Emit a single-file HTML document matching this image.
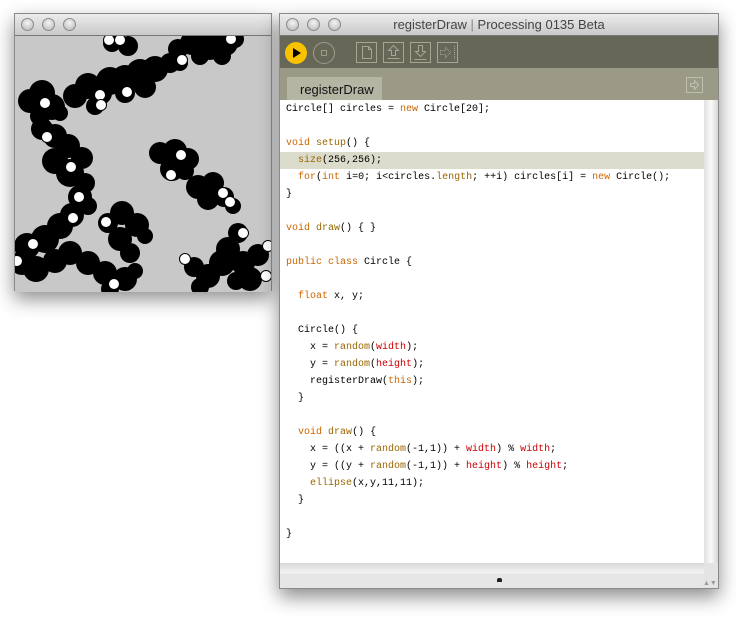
<!DOCTYPE html>
<html><head><meta charset="utf-8"><style>
*{margin:0;padding:0;box-sizing:border-box}
body{width:736px;height:618px;background:#fff;position:relative;overflow:hidden;font-family:"Liberation Sans",sans-serif}
.win{position:absolute;box-shadow:0 8px 18px rgba(0,0,0,.45);border:1px solid #8a8a8a}
.tb{position:absolute;left:0;top:0;right:0;height:22px;background:linear-gradient(#ececec,#c9c9c9);border-bottom:1px solid #777}
.lt{position:absolute;top:4px;width:13px;height:13px;border-radius:50%;background:radial-gradient(circle at 50% 35%,#f4f4f4,#b5b5b5);border:1px solid #8b8b8b}
.code{position:absolute;left:6px;top:100px;font-family:"Liberation Mono",monospace;font-size:10px;line-height:17px;white-space:pre;color:#000}
.k{color:#cc6600}.f{color:#996600}.r{color:#cc0000}
</style></head><body>
<div class="win" style="left:14px;top:13px;width:258px;height:278px;background:#c8c8c8">
<div class="tb"><div class="lt" style="left:6px"></div><div class="lt" style="left:27px"></div><div class="lt" style="left:48px"></div></div>
<svg style="position:absolute;left:0;top:22px" width="256" height="256" viewBox="15 35 256 256">
<rect x="15" y="35" width="256" height="256" fill="#c8c8c8"/>
<g fill="#000">
<circle cx="112" cy="42" r="9"/><circle cx="128" cy="45" r="10"/>
<circle cx="178" cy="48" r="10"/><circle cx="192" cy="42" r="12"/><circle cx="210" cy="45" r="14"/><circle cx="225" cy="42" r="13"/><circle cx="235" cy="38" r="9"/><circle cx="200" cy="55" r="9"/><circle cx="222" cy="55" r="9"/><circle cx="180" cy="62" r="8"/>
<circle cx="30" cy="100" r="12"/><circle cx="42" cy="92" r="13"/><circle cx="52" cy="106" r="13"/><circle cx="40" cy="115" r="10"/><circle cx="60" cy="112" r="8"/>
<circle cx="75" cy="95" r="12"/><circle cx="88" cy="85" r="13"/><circle cx="100" cy="92" r="12"/><circle cx="110" cy="80" r="14"/><circle cx="125" cy="78" r="14"/><circle cx="140" cy="72" r="14"/><circle cx="155" cy="68" r="13"/><circle cx="170" cy="62" r="10"/><circle cx="145" cy="86" r="11"/><circle cx="125" cy="92" r="10"/><circle cx="95" cy="105" r="9"/>
<circle cx="42" cy="128" r="11"/><circle cx="55" cy="135" r="12"/><circle cx="68" cy="145" r="12"/><circle cx="82" cy="157" r="11"/><circle cx="55" cy="160" r="13"/><circle cx="70" cy="172" r="14"/><circle cx="85" cy="182" r="10"/><circle cx="80" cy="196" r="12"/><circle cx="88" cy="205" r="9"/><circle cx="72" cy="214" r="12"/><circle cx="60" cy="225" r="13"/><circle cx="45" cy="238" r="14"/><circle cx="27" cy="245" r="13"/><circle cx="22" cy="262" r="12"/><circle cx="36" cy="268" r="13"/><circle cx="55" cy="260" r="12"/><circle cx="70" cy="252" r="12"/><circle cx="88" cy="262" r="12"/><circle cx="105" cy="272" r="12"/><circle cx="125" cy="278" r="12"/><circle cx="110" cy="288" r="9"/><circle cx="135" cy="270" r="8"/>
<circle cx="108" cy="222" r="10"/><circle cx="122" cy="212" r="12"/><circle cx="137" cy="224" r="12"/><circle cx="120" cy="238" r="12"/><circle cx="130" cy="252" r="10"/><circle cx="145" cy="235" r="8"/>
<circle cx="160" cy="152" r="11"/><circle cx="175" cy="150" r="12"/><circle cx="188" cy="158" r="11"/><circle cx="172" cy="168" r="12"/><circle cx="185" cy="170" r="9"/>
<circle cx="198" cy="186" r="12"/><circle cx="213" cy="182" r="11"/><circle cx="208" cy="198" r="11"/><circle cx="224" cy="196" r="10"/><circle cx="233" cy="205" r="8"/>
<circle cx="238" cy="232" r="10"/><circle cx="228" cy="248" r="12"/><circle cx="222" cy="262" r="13"/><circle cx="208" cy="275" r="12"/><circle cx="194" cy="266" r="10"/><circle cx="243" cy="262" r="12"/><circle cx="258" cy="254" r="11"/><circle cx="250" cy="278" r="12"/><circle cx="200" cy="286" r="9"/><circle cx="236" cy="280" r="9"/>
</g>
<g fill="#fff" stroke="#000" stroke-width="1">
<circle cx="109" cy="39" r="5.5"/><circle cx="120" cy="39" r="5.5"/><circle cx="182" cy="59" r="5.5"/><circle cx="231" cy="38" r="5.5"/>
<circle cx="45" cy="102" r="5.5"/><circle cx="100" cy="94" r="5.5"/><circle cx="101" cy="104" r="5.5"/><circle cx="127" cy="91" r="5.5"/>
<circle cx="47" cy="136" r="5.5"/><circle cx="71" cy="166" r="5.5"/><circle cx="79" cy="196" r="5.5"/><circle cx="73" cy="217" r="5.5"/><circle cx="33" cy="243" r="5.5"/><circle cx="17" cy="260" r="5.5"/><circle cx="106" cy="221" r="5.5"/><circle cx="114" cy="283" r="5.5"/>
<circle cx="181" cy="154" r="5.5"/><circle cx="171" cy="174" r="5.5"/><circle cx="223" cy="192" r="5.5"/><circle cx="230" cy="201" r="5.5"/>
<circle cx="243" cy="232" r="5.5"/><circle cx="185" cy="258" r="5.5"/><circle cx="268" cy="245" r="5.5"/><circle cx="266" cy="275" r="5.5"/>
</g></svg>
</div>
<div class="win" style="left:279px;top:13px;width:440px;height:576px;background:#fff">
<div class="tb"><div class="lt" style="left:6px"></div><div class="lt" style="left:27px"></div><div class="lt" style="left:48px"></div>
<div style="position:absolute;left:0;right:0;top:3px;text-align:center;font-size:13px;color:#444">registerDraw <span style="color:#888">|</span> Processing 0135 Beta</div></div>
<div style="position:absolute;left:0;top:22px;width:438px;height:32px;background:#676758">
<div style="position:absolute;left:5px;top:6px;width:22px;height:22px;border-radius:50%;background:#f8c200"></div>
<div style="position:absolute;left:13px;top:12px;width:0;height:0;border-left:8px solid #000;border-top:5px solid transparent;border-bottom:5px solid transparent"></div>
<div style="position:absolute;left:33px;top:6px;width:22px;height:22px;border-radius:50%;border:1px solid #9d9d8c"></div>
<div style="position:absolute;left:41px;top:14px;width:6px;height:6px;border:1px solid #9d9d8c"></div>
<svg style="position:absolute;left:76px;top:6px" width="110" height="22" fill="none" stroke="#a6a695" stroke-width="1">
<rect x="0.5" y="0.5" width="20" height="20"/><path d="M6.5 4.5h6l3 3v9h-9z M12.5 4.5v3h3"/>
<rect x="27.5" y="0.5" width="20" height="20"/><path d="M37.5 3.5l-5 5h3v5h4v-5h3z M31.5 16.5h12"/>
<rect x="54.5" y="0.5" width="20" height="20"/><path d="M64.5 14.5l-5-5h3v-6h4v6h3z M58.5 17.5h12"/>
<rect x="81.5" y="0.5" width="20" height="20"/><path d="M84.5 8.5h5v-3l5 5-5 5v-3h-5z M98.5 4v14" stroke-dasharray="1 1"/>
</svg>
</div>
<div style="position:absolute;left:0;top:54px;width:438px;height:32px;background:#9a9a86">
<div style="position:absolute;left:7px;top:9px;width:95px;height:23px;background:#b5b5a4;font-size:13px;padding:5px 0 0 13px;color:#111">registerDraw</div>
<svg style="position:absolute;left:406px;top:9px" width="18" height="17" fill="none" stroke="#c0c0b0"><rect x="0.5" y="0.5" width="16" height="15"/><path d="M4.5 6.5h4v-3l4 4.5-4 4.5v-3h-4z"/></svg>
</div>
<div style="position:absolute;left:0;top:138px;width:424px;height:17px;background:#dcdccc"></div>
<div class="code" style="top:87px">Circle[] circles = <span class="k">new</span> Circle[20];

<span class="k">void</span> <span class="f">setup</span>() {
  <span class="f">size</span>(256,256);
  <span class="k">for</span>(<span class="k">int</span> i=0; i&lt;circles.<span class="f">length</span>; ++i) circles[i] = <span class="k">new</span> Circle();
}

<span class="k">void</span> <span class="f">draw</span>() { }

<span class="k">public</span> <span class="k">class</span> Circle {

  <span class="k">float</span> x, y;

  Circle() {
    x = <span class="f">random</span>(<span class="r">width</span>);
    y = <span class="f">random</span>(<span class="r">height</span>);
    registerDraw(<span class="k">this</span>);
  }

  <span class="k">void</span> <span class="f">draw</span>() {
    x = ((x + <span class="f">random</span>(-1,1)) + <span class="r">width</span>) % <span class="r">width</span>;
    y = ((y + <span class="f">random</span>(-1,1)) + <span class="r">height</span>) % <span class="r">height</span>;
    <span class="f">ellipse</span>(x,y,11,11);
  }

}</div>
<div style="position:absolute;left:424px;top:86px;width:14px;height:463px;background:linear-gradient(90deg,#e0e0e0,#fafafa,#d8d8d8)"></div>
<div style="position:absolute;left:0;top:549px;width:438px;height:25px;background:linear-gradient(#d8d8d8,#f4f4f4 40%,#e6e6e6 45%)"></div>
<div style="position:absolute;left:217px;top:564px;width:5px;height:4px;background:#222;border-radius:2px 2px 0 0"></div>
<div style="position:absolute;left:424px;top:549px;width:14px;height:25px;background:#e4e4e4"></div>
<div style="position:absolute;left:423px;top:566px;font-size:7px;color:#999">▲▼</div>
</div>
</body></html>
